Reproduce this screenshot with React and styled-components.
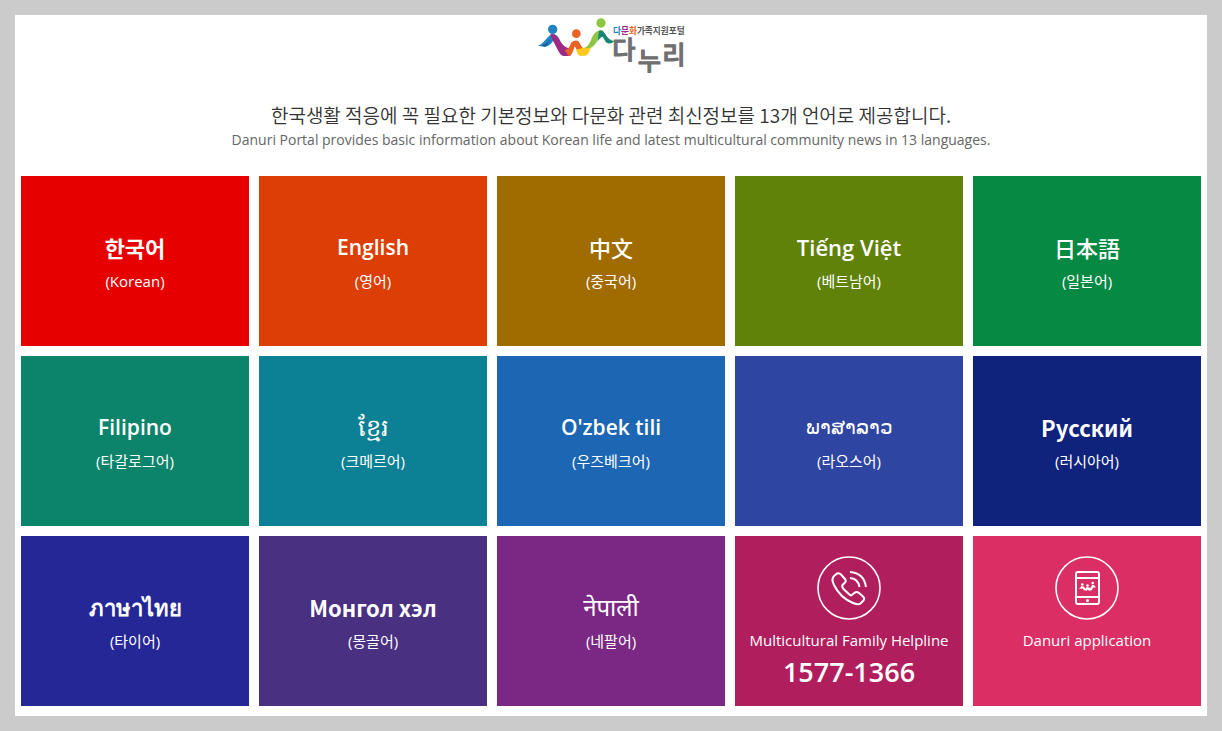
import React from 'react';
import styled, { createGlobalStyle } from 'styled-components';

const GlobalStyle = createGlobalStyle`
  * {
    box-sizing: border-box;
  }

  body {
    margin: 0;
    padding: 15px;
    background: #cbcbcb;
    font-family: "Open Sans", "Noto Sans CJK KR", sans-serif;
  }
`;

const Page = styled.div`
  padding: 0 6px 10px;
  background: #fff;
`;

const Header = styled.header`
  display: flex;
  flex-direction: column;
  align-items: center;
  padding-bottom: 25px;
  text-align: center;
`;

const LogoLink = styled.a`
  display: block;
  height: 64px;
  margin-bottom: 22px;
`;

const Intro = styled.h1`
  margin: 0;
  color: #333;
  font-family: "Noto Sans CJK KR", sans-serif;
  font-size: 19px;
  font-weight: 350;
  line-height: 28px;
`;

const IntroEnglish = styled.p`
  margin: 0;
  color: #666;
  font-size: 14px;
  font-weight: 400;
  line-height: 22px;
`;

const Grid = styled.main`
  display: grid;
  grid-template-columns: repeat(5, 1fr);
  gap: 10px;
`;

const Tile = styled.a`
  display: flex;
  flex-direction: column;
  align-items: center;
  min-height: 170px;
  padding-top: ${({ $service }) => ($service ? '20px' : '54px')};
  background: ${({ $color }) => $color};
  color: #fff;
  text-align: center;
  text-decoration: none;
`;

const Name = styled.strong`
  font-family: ${({ $font }) => ($font ? `"${$font}", ` : '')}"Open Sans", "Noto Sans CJK KR", sans-serif;
  font-size: ${({ $size }) => $size || 22}px;
  font-weight: ${({ $weight }) => $weight || 600};
  line-height: 34px;
`;

const Label = styled.span`
  font-size: 15px;
  font-weight: 400;
  line-height: 34px;
`;

const Phone = styled.strong`
  font-size: 27px;
  font-weight: 600;
  line-height: 30px;
`;

const Icon = styled.svg`
  display: block;
  width: 64px;
  height: 64px;
  margin-bottom: 3px;
  fill: none;
  stroke: #fff;
  stroke-width: 2;
  stroke-linejoin: round;
`;

const languages = [
  { name: '한국어', label: '(Korean)', color: '#e60000', font: 'Noto Sans CJK KR', weight: 700 },
  { name: 'English', label: '(영어)', color: '#dc3e06', size: 21 },
  { name: '中文', label: '(중국어)', color: '#a06c00', font: 'Noto Sans CJK SC', weight: 500 },
  { name: 'Tiếng Việt', label: '(베트남어)', color: '#608209' },
  { name: '日本語', label: '(일본어)', color: '#068943', font: 'Noto Sans CJK JP', weight: 500 },
  { name: 'Filipino', label: '(타갈로그어)', color: '#0b846b', size: 21 },
  { name: 'ខ្មែរ', label: '(크메르어)', color: '#0c8094', weight: 400, size: 24 },
  { name: "O'zbek tili", label: '(우즈베크어)', color: '#1d66b3', size: 21 },
  { name: 'ພາສາລາວ', label: '(라오스어)', color: '#2e45a2', weight: 400, size: 20 },
  { name: 'Русский', label: '(러시아어)', color: '#0f237c', font: 'Noto Sans CJK KR', weight: 700 },
  { name: 'ภาษาไทย', label: '(타이어)', color: '#252796', weight: 700 },
  { name: 'Монгол хэл', label: '(몽골어)', color: '#4a3081', font: 'Noto Sans CJK KR', weight: 700 },
  { name: 'नेपाली', label: '(네팔어)', color: '#7a2883', font: 'Noto Sans', weight: 400, size: 24 },
];

const Logo = () => (
  <svg width="148" height="64" viewBox="-2 0 444 192" role="img" aria-label="다문화가족지원포털 다누리">
    <path fill="#2083c5" d="M1 92 C20 86 26 64 41 59 Q54 54 63 69 L67 78 L48 75 Q37 94 22 96 Z" />
    <path fill="#1e4f94" d="M38 70 Q31 90 22 94 L13 92 Q31 86 38 70Z" />
    <path fill="#9d2a87" d="M38 58 Q54 54 66 75 Q80 101 98 100 Q103 111 98 123 L77 123 Q69 121 62 108 L42 70 Z" />
    <path fill="#e96324" d="M81 106 Q96 101 100 83 Q110 74 122 78 L137 102 L122 111 L111 94 Q104 123 93 123 Z" />
    <path fill="#fbca1d" d="M121 103 L135 99 Q151 97 160 90 Q157 119 142 122 L127 123 Q119 119 115 103 Z" />
    <path fill="#8dc63f" d="M139 100 Q153 96 162 70 Q173 43 195 46 L207 66 L184 65 Q174 92 160 98 Z" />
    <path fill="#168476" d="M184 47 Q196 44 206 62 Q214 75 230 78 Q218 91 205 82 L195 65 Q186 67 180 80 Z" />
    <circle cx="45" cy="43" r="14" fill="#2083c5" />
    <circle cx="116" cy="56" r="13" fill="#e96324" />
    <circle cx="190" cy="24" r="14" fill="#8dc63f" />
    <g fontFamily="Noto Sans CJK KR, sans-serif">
      <text x="226" y="56" fill="#555" fontSize="26" fontWeight="700">
        <tspan fill="#2083c5">다</tspan>
        <tspan fill="#9d2a87">문</tspan>
        <tspan fill="#e96324">화</tspan>
        가족지원포털
      </text>
      <text fill="#6f6f70" stroke="#6f6f70" strokeWidth="3" strokeLinejoin="round" fontSize="76" fontWeight="500">
        <tspan x="224" y="133">다</tspan>
        <tspan x="300" y="166">누</tspan>
        <tspan x="374" y="146">리</tspan>
      </text>
    </g>
  </svg>
);

const PhoneIcon = () => (
  <Icon viewBox="0 0 64 64" aria-hidden="true">
    <circle cx="32" cy="32" r="31" strokeWidth="1.6" />
    <path d="M17 20 L20 17.500 Q22 16.500 24 18.500 L28 23 Q29.500 25 28 26.500 L25.500 29 Q24.500 31 27 33.500 L33 39 Q34.500 40 36 38 L38 36.500 Q40 35.500 42 37 L46 40.500 Q48 42.500 46.500 44.500 L44 47 Q41.500 49.500 36 47 Q23 41.500 17 29 Q14 23 17 20 Z" />
    <path d="M33 16 Q47 17 49 31 M33 22 Q41 22.500 42.500 31" />
  </Icon>
);

const AppIcon = () => (
  <Icon viewBox="0 0 64 64" aria-hidden="true">
    <circle cx="32" cy="32" r="31" strokeWidth="1.6" />
    <rect x="21" y="16" width="23" height="32" rx="2" />
    <path d="M21 22 H44 M21 41 H44" />
    <g fill="#fff" stroke="none">
      <circle cx="32.500" cy="44.500" r="1.500" />
      <circle cx="27.300" cy="28.500" r="1.300" />
      <circle cx="32.500" cy="29.500" r="1.300" />
      <circle cx="37.700" cy="27" r="1.300" />
      <path d="M24 33 L26.500 30 L28.500 30.500 L30.300 32.500 L32 31 L34 31.500 L35.500 32 L37 29 L39 29 L41 31.500 L38.500 31.500 L36.500 34.500 L33.500 34.500 L32.800 33.500 L31.800 34.800 L29.500 34.500 L27.500 32.500 Z" />
    </g>
  </Icon>
);

const App = () => (
  <>
    <GlobalStyle />
    <Page>
      <Header>
        <LogoLink href="#home">
          <Logo />
        </LogoLink>
        <Intro>한국생활 적응에 꼭 필요한 기본정보와 다문화 관련 최신정보를 13개 언어로 제공합니다.</Intro>
        <IntroEnglish>
          Danuri Portal provides basic information about Korean life and latest multicultural community news in 13 languages.
        </IntroEnglish>
      </Header>
      <Grid>
        {languages.map(({ name, label, color, font, weight, size }) => (
          <Tile key={name} href="#language" $color={color}>
            <Name $font={font} $weight={weight} $size={size}>{name}</Name>
            <Label>{label}</Label>
          </Tile>
        ))}
        <Tile href="tel:1577-1366" $color="#b01e5d" $service>
          <PhoneIcon />
          <Label>Multicultural Family Helpline</Label>
          <Phone>1577-1366</Phone>
        </Tile>
        <Tile href="#application" $color="#da2e64" $service>
          <AppIcon />
          <Label>Danuri application</Label>
        </Tile>
      </Grid>
    </Page>
  </>
);

export default App;
